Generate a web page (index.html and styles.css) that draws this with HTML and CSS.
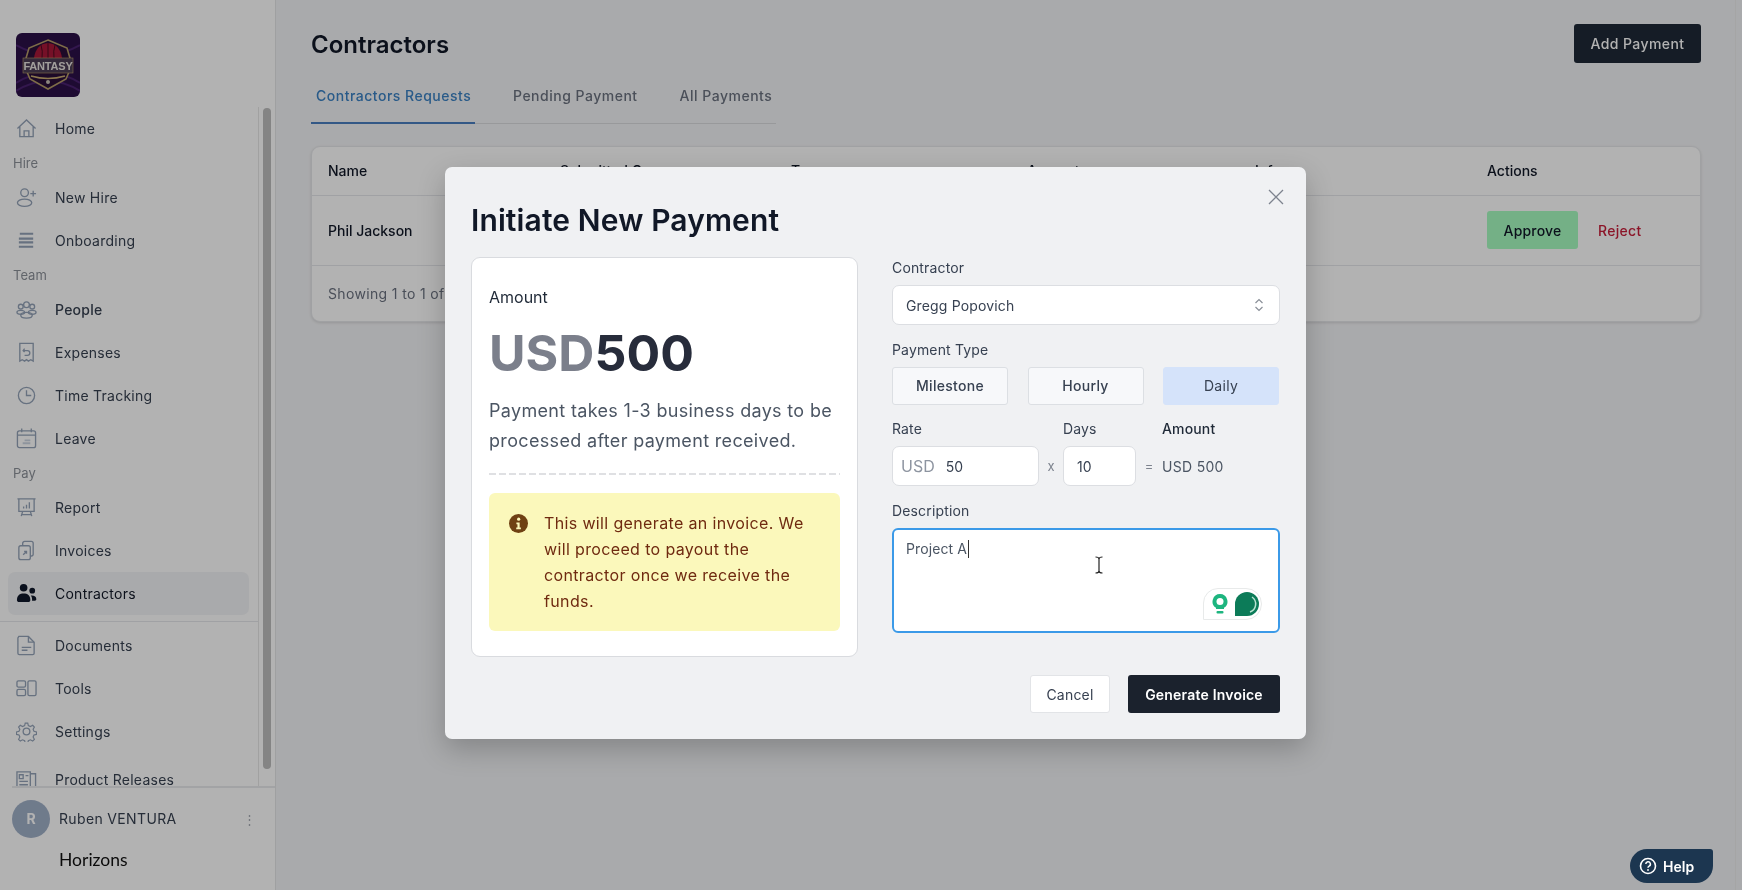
FILE: index.html
```html
<!DOCTYPE html>
<html lang="en">
<head>
<meta charset="utf-8">
<title>Contractors</title>
<link rel="stylesheet" href="styles.css">
</head>
<body>
<div class="app">
  <aside class="sidebar">
    <div class="logo">
      <svg viewBox="0 0 64 64" width="64" height="64">
        <rect width="64" height="64" rx="6" fill="#2c1148"/>
        <path d="M0 50 Q32 30 64 50 M0 58 Q32 38 64 58 M0 12 Q32 30 64 12" stroke="#4a2170" stroke-width="2" fill="none"/>
        <path d="M32 7 L51 15 L56 32 L50 46 L32 56 L14 46 L8 32 L13 15Z" fill="#2a0f38" stroke="#b59c68" stroke-width="1.6"/>
        <path d="M18 25 Q20 11 32 10 Q44 11 46 25Z" fill="#a81838"/>
        <path d="M32 10 V25 M25 12 Q27 18 26 25 M39 12 Q37 18 38 25" stroke="#4a0d20" stroke-width="1" fill="none"/>
        <rect x="7" y="25" width="50" height="15" fill="#4b3d55" stroke="#b59c68" stroke-width=".6"/>
        <text x="32" y="37" class="logo-text" text-anchor="middle">FANTASY</text>
        <path d="M15 43 Q32 48 49 43" stroke="#c9ad72" stroke-width="1.6" fill="none"/>
        <circle cx="32" cy="49" r="2" fill="#c9c2b8"/>
      </svg>
    </div>
    <nav class="nav">
      <a class="item"><svg class="ico" viewBox="0 0 22 22"><path d="M1.500 11 11 2l9.500 9M4 9v10.500h14V9M8.500 19.500v-6h5v6"/></svg>Home</a>
      <div class="group">Hire</div>
      <a class="item"><svg class="ico" viewBox="0 0 22 22"><circle cx="9" cy="6" r="4"/><ellipse cx="9" cy="16.500" rx="7.500" ry="3.800"/><path d="M18 4v6M15 7h6"/></svg>New Hire</a>
      <a class="item"><svg class="ico" viewBox="0 0 22 22"><path class="thick" d="M4 4h14M3 9h15M3 13h15M3 17.500h15"/></svg>Onboarding</a>
      <div class="group">Team</div>
      <a class="item medium"><svg class="ico" viewBox="0 0 22 22"><circle cx="11" cy="6" r="3"/><circle cx="5" cy="8" r="2.500"/><circle cx="17" cy="8" r="2.500"/><ellipse cx="5" cy="14" rx="4" ry="2"/><ellipse cx="17" cy="14" rx="4" ry="2"/><ellipse cx="11" cy="17" rx="6" ry="3"/></svg>People</a>
      <a class="item"><svg class="ico" viewBox="0 0 22 22"><path d="M4 1.500h14V20l-2.500-1.500L13 20l-2-1.500L9 20l-2.500-1.500L4 20z"/><path d="M9 7 7.500 9 9 10.500M7.500 9H12a2.500 2.500 0 0 1 0 5H9"/></svg>Expenses</a>
      <a class="item"><svg class="ico" viewBox="0 0 22 22"><circle cx="11" cy="11" r="8.500"/><path d="M11 5.500V11h5"/></svg>Time Tracking</a>
      <a class="item"><svg class="ico" viewBox="0 0 22 22"><rect x="1.500" y="3" width="19" height="17.500" rx="2"/><path d="M6 .5v4M16 .5v4M1.500 7.500h19"/><path class="faint" d="M7 16h8M9 13h6"/></svg>Leave</a>
      <div class="group">Pay</div>
      <a class="item"><svg class="ico" viewBox="0 0 22 22"><path d="M1.500 2h19M3 2v13h16V2M7 15l-1.500 5M15 15l1.500 5M6 18.500h10"/><path d="M8 12v-2M11 12V8M14 12V5.500"/></svg>Report</a>
      <a class="item"><svg class="ico" viewBox="0 0 22 22"><rect x="3" y="6" width="12" height="14.500" rx="2"/><path d="M7 6V3.500a2 2 0 0 1 2-2h7a2 2 0 0 1 2 2V15a2 2 0 0 1-3 1.500M7.500 15.500l3.500-3.500M8.500 12H11v2.500"/></svg>Invoices</a>
      <a class="item active"><svg class="ico solid" viewBox="0 0 22 22"><circle cx="8" cy="5" r="4"/><path d="M1 18c0-5 3-7 7-7s7 2 7 7c0 1-1 2-2 2H3c-1 0-2-1-2-2z"/><circle cx="17" cy="8" r="3"/><path d="M16.500 13c3 0 4.800 1.200 4.800 4 0 .8-.6 1.500-1.500 1.500h-3c.3-2-.2-4-1.300-5.400.3-.1.600-.1 1-.1z"/></svg>Contractors</a>
      <div class="rule"></div>
      <a class="item"><svg class="ico" viewBox="0 0 22 22"><path d="M3 1.500h10l6 6V19a1.500 1.500 0 0 1-1.500 1.500h-14A1.500 1.500 0 0 1 2 19V3z"/><path d="M13 1.500v6h6M6 13h10M6 16h6"/></svg>Documents</a>
      <a class="item"><svg class="ico" viewBox="0 0 22 22"><rect x="1" y="3" width="9" height="6.500" rx="1.500"/><rect x="1" y="12" width="9" height="6.500" rx="1.500"/><rect x="12.500" y="3" width="8.500" height="15.500" rx="1.500"/></svg>Tools</a>
      <a class="item"><svg class="ico" viewBox="0 0 22 22"><circle cx="11" cy="11" r="3.500"/><path d="M9.500 1h3l.7 3 2.500 1.100 2.700-1.500 2 2.100-1.500 2.700 1 2.400 3 .7v3l-3 .7-1 2.400 1.500 2.700-2 2.100-2.700-1.500-2.500 1.100-.7 3h-3l-.7-3-2.500-1.100-2.700 1.500-2-2.100 1.500-2.700-1-2.400-3-.7v-3l3-.7 1-2.400-1.500-2.700 2-2.100 2.700 1.500 2.500-1.100z" transform="translate(1.300 1.300) scale(.88)"/></svg>Settings</a>
      <a class="item releases"><svg class="ico" viewBox="0 0 22 22"><path d="M1 3h14v18H1zM15 5h5.500v16"/><path d="M3.500 6h4v4h-4zM10 7h3M3.500 13h9M3.500 16.500h9"/></svg>Product Releases</a>
      <div class="scrollbar"></div>
    </nav>
    <div class="account">
      <div class="user">
        <span class="avatar">R</span>
        <span class="user-name">Ruben VENTURA</span>
        <span class="dots">⋮</span>
      </div>
      <div class="brand">Horizons</div>
    </div>
  </aside>

  <main class="main">
    <header class="head">
      <h1 class="title">Contractors</h1>
      <button class="add-btn">Add Payment</button>
    </header>
    <div class="tabs">
      <span class="tab on">Contractors Requests</span>
      <span class="tab">Pending Payment</span>
      <span class="tab">All Payments</span>
    </div>
    <section class="table-card">
      <table class="table">
        <colgroup>
          <col class="c1"><col class="c2"><col class="c3"><col class="c4"><col class="c5"><col>
        </colgroup>
        <thead>
          <tr><th>Name</th><th>Submitted On</th><th>Type</th><th>Amount</th><th>Info</th><th>Actions</th></tr>
        </thead>
        <tbody>
          <tr>
            <td class="name">Phil Jackson</td><td></td><td></td><td></td><td></td>
            <td><div class="actions"><button class="approve">Approve</button><span class="reject">Reject</span></div></td>
          </tr>
        </tbody>
      </table>
      <div class="table-foot">Showing 1 to 1 of</div>
    </section>
  </main>
</div>

<div class="overlay">
  <div class="modal">
    <svg class="close" viewBox="0 0 16 16" width="16" height="16"><path d="M1 1l14 14M15 1 1 15"/></svg>
    <h2 class="modal-title">Initiate New Payment</h2>
    <div class="modal-body">
      <div class="summary">
        <div class="sum-label">Amount</div>
        <div class="sum-amount"><span class="cur">USD</span>500</div>
        <p class="sum-note">Payment takes 1-3 business days to be processed after payment received.</p>
        <div class="dash"></div>
        <div class="alert">
          <svg class="alert-ico" viewBox="0 0 20 20" width="19" height="19"><circle cx="10" cy="10" r="10" fill="#6f4113"/><circle cx="10.200" cy="5.500" r="1.700" fill="#fbf8bb"/><path d="M7.800 9h3.400v5.300h1.300v1.700H7.600v-1.700h1.300v-3.600H7.800z" fill="#fbf8bb"/></svg>
          <div class="alert-text">This will generate an invoice. We will proceed to payout the contractor once we receive the funds.</div>
        </div>
      </div>
      <div class="form">
        <div class="label">Contractor</div>
        <div class="select">
          <span>Gregg Popovich</span>
          <svg viewBox="0 0 10 16" width="10" height="16" class="updown"><path d="M1.500 6 5 2.500 8.500 6M1.500 10 5 13.500 8.500 10"/></svg>
        </div>
        <div class="label sp">Payment Type</div>
        <div class="types">
          <span class="type">Milestone</span>
          <span class="type">Hourly</span>
          <span class="type sel">Daily</span>
        </div>
        <div class="calc">
          <div class="calc-label c-rate">Rate</div>
          <div class="calc-label c-days">Days</div>
          <div class="calc-label c-amt">Amount</div>
          <div class="field"><span class="pre">USD</span><span>50</span></div>
          <div class="op">x</div>
          <div class="field solo"><span>10</span></div>
          <div class="op">=</div>
          <div class="total">USD 500</div>
        </div>
        <div class="label sp">Description</div>
        <div class="textarea">
          <span class="typed">Project A</span><span class="caret"></span>
          <svg class="ibeam" viewBox="0 0 10 18" width="10" height="18"><path d="M1.500 1c2 0 3.500.5 3.500 2v12c0 1.500-1.500 2-3.500 2M8.500 1C6.500 1 5 1.500 5 3v12c0 1.500 1.500 2 3.500 2"/></svg>
          <div class="assist">
            <svg viewBox="0 0 16 20" width="16" height="20"><path d="M8 0a7.500 7.500 0 0 0-4 13.800V15h8v-1.200A7.500 7.500 0 0 0 8 0z" fill="#1db57f"/><circle cx="8" cy="7.500" r="3.500" fill="#fff"/><rect x="4.500" y="17" width="7" height="2.500" rx="1" fill="#1db57f"/></svg>
            <svg viewBox="0 0 24 24" width="24" height="24"><path d="M0 24V12a12 12 0 1 1 12 12z" fill="#0c7b58"/><path d="M15 20a8.500 8.500 0 0 0 2-15" fill="none" stroke="#b9e3d2" stroke-width="1.500"/></svg>
          </div>
        </div>
      </div>
    </div>
    <div class="modal-foot">
      <button class="cancel">Cancel</button>
      <button class="generate">Generate Invoice</button>
    </div>
  </div>
  <button class="help">
    <svg viewBox="0 0 18 18" width="18" height="18"><circle cx="9" cy="9" r="7.500" fill="none" stroke="#fff" stroke-width="1.600"/><path d="M6.800 7a2.300 2.300 0 1 1 3.300 2.100c-.8.400-1.100.8-1.100 1.600" fill="none" stroke="#fff" stroke-width="1.500"/><circle cx="9" cy="13" r=".9" fill="#fff"/></svg>
    Help
  </button>
</div>
</body>
</html>
```
FILE: styles.css
```css
* { box-sizing: border-box; }
html, body { margin: 0; height: 100%; overflow: hidden; }
body {
  font-family: Inter, "Liberation Sans", sans-serif;
  font-size: 14px;
  color: #1f2937;
  background: #f3f4f6;
  filter: blur(0.5px);
}
button { font: inherit; border: 0; cursor: pointer; }

.app { display: flex; height: 890px; }

/* Sidebar */
.sidebar {
  width: 276px;
  flex: none;
  display: flex;
  flex-direction: column;
  background: #fff;
  border-right: 1px solid #e4e5e7;
}
.logo { height: 64px; margin: 33px 0 10px 16px; }
.logo svg { display: block; }
.logo-text { font: 700 11px "Liberation Sans", sans-serif; fill: #e8e4e0; letter-spacing: -.2px; }
.nav {
  position: relative;
  flex: 1;
  min-height: 0;
  overflow: hidden;
}
.item {
  display: flex;
  align-items: center;
  gap: 18px;
  width: 241px;
  height: 43px;
  margin-left: 8px;
  padding-left: 8px;
  border-radius: 7px;
  color: #374151;
  font-size: 14px;
  letter-spacing: .25px;
}
.medium { font-weight: 500; }
.active { background: #f3f4f6; color: #111827; }
.ico {
  width: 21px;
  height: 21px;
  flex: none;
  fill: none;
  stroke: #94a3b8;
  stroke-width: 1.4;
}
.ico .thick { stroke-width: 2.2; }
.ico .faint { stroke: #cbd5e1; stroke-width: 2; }
.ico.solid { fill: #0f172a; stroke: none; }
.group { height: 26px; line-height: 26px; padding-left: 13px; font-size: 13px; color: #8c9199; }
.rule { width: 258px; height: 1px; margin: 6px 0 2px; background: #e5e7eb; }
.releases { margin-top: 5px; }
.scrollbar {
  position: absolute;
  top: 0;
  left: 258px;
  bottom: 0;
  width: 17px;
  border-left: 1px solid #e7e7e7;
}
.scrollbar::after {
  content: "";
  position: absolute;
  top: 1px;
  left: 4px;
  width: 8px;
  height: 661px;
  border-radius: 4px;
  background: #bdbdbd;
}
.account { height: 104px; margin-left: 12px; border-top: 2px solid #e9eaec; flex: none; }
.user { display: flex; align-items: center; height: 61px; }
.avatar {
  width: 38px;
  height: 38px;
  flex: none;
  border-radius: 50%;
  background: #a0b0c8;
  color: #fff;
  font-weight: 700;
  font-size: 14px;
  line-height: 38px;
  text-align: center;
}
.user-name { margin-left: 9px; color: #374151; letter-spacing: .35px; }
.dots { margin-left: auto; margin-right: 19px; color: #a8adb5; font-size: 13px; }
.brand { margin: 0 0 0 47px; font: 400 17.500px/22px Lato, sans-serif; color: #111; }

/* Main */
.main { flex: 1; min-width: 0; padding: 24px 34px 0 35px; background: #f3f4f6; border-right: 1px solid #ececec; margin-right: 6px; }
.head { display: flex; justify-content: space-between; align-items: center; height: 39px; }
.title { margin: 3px 0 0; font-size: 24px; line-height: 32px; font-weight: 600; color: #111827; }
.add-btn {
  width: 127px;
  height: 39px;
  border-radius: 3px;
  background: #1f2937;
  color: #fff;
  font-weight: 500;
  font-size: 14px;
  letter-spacing: .4px;
}
.tabs {
  display: flex;
  width: 465px;
  height: 61px;
  padding-top: 19px;
  border-bottom: 1px solid #dadcdf;
  gap: 33px;
}
.tab { height: 42px; padding: 4px 4px 0 5px; line-height: 20px; color: #6b7280; font-weight: 500; letter-spacing: .5px; white-space: nowrap; }
.tab.on { color: #3b82c4; border-bottom: 2px solid #4a7fc1; }
.tab:first-child { width: 164px; }
.table-card {
  margin-top: 22px;
  border: 1px solid #e6e7ea;
  border-radius: 9px;
  background: #fff;
  box-shadow: 0 1px 3px rgba(0,0,0,.12);
  overflow: hidden;
}
.table { width: 100%; border-collapse: collapse; table-layout: fixed; }
.c1 { width: 232px; }
.c2 { width: 231px; }
.c3 { width: 236px; }
.c4 { width: 228px; }
.c5 { width: 232px; }
.table th { height: 48px; padding: 0 16px; text-align: left; font-weight: 500; color: #111827; border-bottom: 1px solid #e5e7eb; }
.table td { height: 70px; padding: 0 16px; border-bottom: 1px solid #e5e7eb; color: #374151; }
.table td.name { font-weight: 500; color: #111827; }
.actions { display: flex; align-items: center; gap: 20px; }
.approve { width: 91px; height: 38px; border-radius: 3px; background: #a6fcc0; color: #111827; font-weight: 500; letter-spacing: .2px; }
.reject { color: #c81e3a; font-weight: 500; letter-spacing: .3px; }
.table-foot { height: 55px; padding: 0 16px; line-height: 55px; color: #6b7280; letter-spacing: .35px; }

/* Overlay + modal */
.overlay { position: fixed; inset: 0; background: rgba(0,0,0,.3); }
.modal {
  position: absolute;
  left: 445px;
  top: 167px;
  width: 861px;
  padding: 35px 26px 26px;
  border-radius: 7px;
  background: #f0f1f3;
  box-shadow: 0 10px 28px rgba(0,0,0,.22);
}
.close { position: absolute; top: 22px; right: 22px; fill: none; stroke: #7d838e; stroke-width: 1.3; }
.modal-title { margin: 0 0 19px; font-size: 30px; line-height: 36px; font-weight: 600; letter-spacing: .12px; color: #111827; }
.modal-body { display: grid; grid-template-columns: 387px 388px; gap: 34px; }
.summary {
  height: 400px;
  padding: 27px 17px 25px;
  border: 1px solid #d9dbdf;
  border-radius: 9px;
  background: #fff;
}
.sum-label { font-size: 16px; line-height: 24px; color: #1f2937; }
.sum-amount { margin-top: 14px; font-size: 50px; line-height: 60px; font-weight: 700; color: #272c3b; }
.cur { color: #7b7f8b; }
.sum-note { margin: 13px 0 0; font-size: 18px; line-height: 30px; letter-spacing: .33px; color: #4b5563; }
.dash { height: 2px; margin: 17px 0 18px; background: repeating-linear-gradient(90deg, #dfe0e3 0 7px, transparent 7px 10px); }
.alert {
  display: flex;
  gap: 16px;
  padding: 17px 20px;
  border-radius: 6px;
  background: #fbf8bb;
}
.alert-ico { flex: none; margin-top: 4px; }
.alert-text { font-size: 16px; line-height: 26px; letter-spacing: .36px; color: #6f2a10; }

.form { min-width: 0; }
.label { height: 20px; font-size: 14px; line-height: 22px; color: #374151; letter-spacing: .15px; }
.label.sp { margin-top: 14px; }
.calc-label { font-size: 14px; line-height: 20px; color: #374151; letter-spacing: .15px; }
.select {
  display: flex;
  align-items: center;
  justify-content: space-between;
  height: 40px;
  margin-top: 8px;
  padding: 0 15px 0 13px;
  border: 1px solid #dcdee2;
  border-radius: 7px;
  background: #fff;
  color: #374151;
  letter-spacing: .15px;
}
.updown { fill: none; stroke: #8a8f98; stroke-width: 1.2; }
.types { display: grid; grid-template-columns: repeat(3, 116px); gap: 19.500px; margin-top: 8px; }
.type {
  height: 38px;
  line-height: 36px;
  text-align: center;
  border: 1px solid #dcdfe3;
  border-radius: 3px;
  background: #f7f8fa;
  color: #374151;
  font-weight: 500;
  letter-spacing: .3px;
}
.type.sel { border-color: #d5e3fa; background: #d5e3fa; font-weight: 400; }
.calc {
  display: grid;
  grid-template-columns: 147px 24px 73px 26px 1fr;
  grid-template-rows: 20px 40px;
  row-gap: 7px;
  margin-top: 14px;
  align-items: center;
}
.c-rate { grid-column: 1; }
.c-days { grid-column: 3; }
.c-amt { grid-column: 5; font-weight: 500; color: #1f2937; }
.field {
  display: flex;
  align-items: center;
  gap: 11px;
  height: 40px;
  padding-left: 8px;
  border: 1px solid #dcdee2;
  border-radius: 7px;
  background: #fff;
  color: #374151;
}
.field.solo { padding-left: 13px; }
.pre { font-size: 16px; color: #8d94a0; }
.op { text-align: center; font-size: 13px; color: #7d838e; }
.total { color: #4b5563; letter-spacing: .3px; }
.textarea {
  position: relative;
  height: 105px;
  margin-top: 8px;
  padding: 9px 12px;
  border: 2px solid #3b9ae8;
  border-radius: 6px;
  background: #fff;
  line-height: 20px;
  color: #4b5563;
}
.typed { letter-spacing: .1px; }
.caret { display: inline-block; width: 1px; height: 18px; margin-left: 1px; background: #333; vertical-align: -4px; }
.ibeam { position: absolute; left: 200px; top: 26px; fill: none; stroke: #222; stroke-width: 1.200; }
.assist {
  position: absolute;
  left: 309px;
  top: 58px;
  display: flex;
  align-items: center;
  gap: 7px;
  width: 59px;
  height: 32px;
  padding-left: 8px;
  border: 1px solid #e8eaea;
  border-radius: 15px 16px 16px 0;
  background: #fff;
}
.modal-foot { display: flex; justify-content: flex-end; gap: 18px; margin-top: 18px; }
.cancel {
  width: 80px;
  height: 38px;
  border: 1px solid #e2e4e7;
  border-radius: 3px;
  background: #fff;
  color: #374151;
  letter-spacing: .2px;
}
.generate {
  width: 152px;
  height: 38px;
  border-radius: 3px;
  background: #1b222d;
  color: #fff;
  font-weight: 600;
  letter-spacing: .2px;
}
.help {
  position: absolute;
  left: 1630px;
  top: 849px;
  display: flex;
  align-items: center;
  gap: 6px;
  width: 83px;
  height: 34px;
  padding-left: 9px;
  border-radius: 17px 3px 17px 17px;
  background: #1c3650;
  color: #fff;
  font-weight: 600;
  font-size: 14px;
}
```
